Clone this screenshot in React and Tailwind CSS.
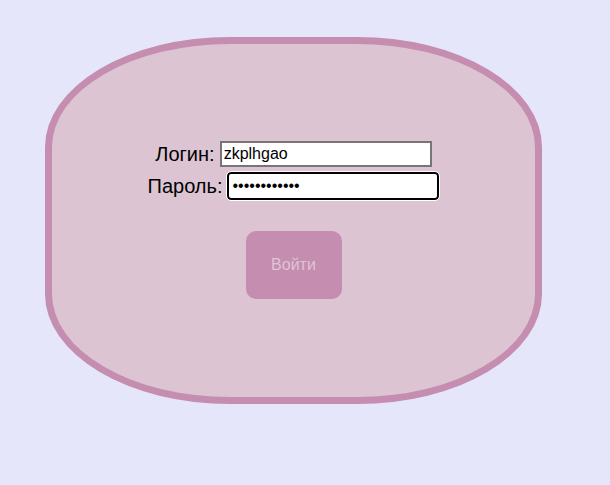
export default function App() {
    return (
        <div className="w-[610px] h-[485px] bg-[#e6e6fa] pt-[37px] pl-[45px] font-['Liberation_Sans',Arial,sans-serif]">
            {/* Login card */}
            <div className="w-[497px] h-[367px] rounded-[185px/110px] border-[7px] border-[#c58db0] bg-[#dcc4d2] flex flex-col items-center justify-center">
                <div className="flex flex-col items-center gap-[5px] mt-[-2px]">
                    <label className="flex items-center gap-[5px] text-[20px] text-black leading-none">
                        <span>Логин:</span>
                        <input
                            type="text"
                            defaultValue="zkplhgao"
                            className="w-[212px] h-[26px] border-2 border-[#767676] bg-white px-[2px] text-[16px] text-black outline-none"
                        />
                    </label>
                    <label className="flex items-center gap-[5px] text-[20px] text-black leading-none">
                        <span>Пароль:</span>
                        <input
                            type="text"
                            defaultValue="••••••••••••"
                            className="w-[212px] h-[28px] border-2 border-black rounded-[4px] bg-white px-[3px] text-[16px] text-black outline outline-1 outline-white"
                        />
                    </label>
                </div>
                <button className="mt-[31px] w-[96px] h-[68px] rounded-[10px] bg-[#c58db0] text-[16px] text-[#dfc3d6]">
                    Войти
                </button>
            </div>
        </div>
    );
}
